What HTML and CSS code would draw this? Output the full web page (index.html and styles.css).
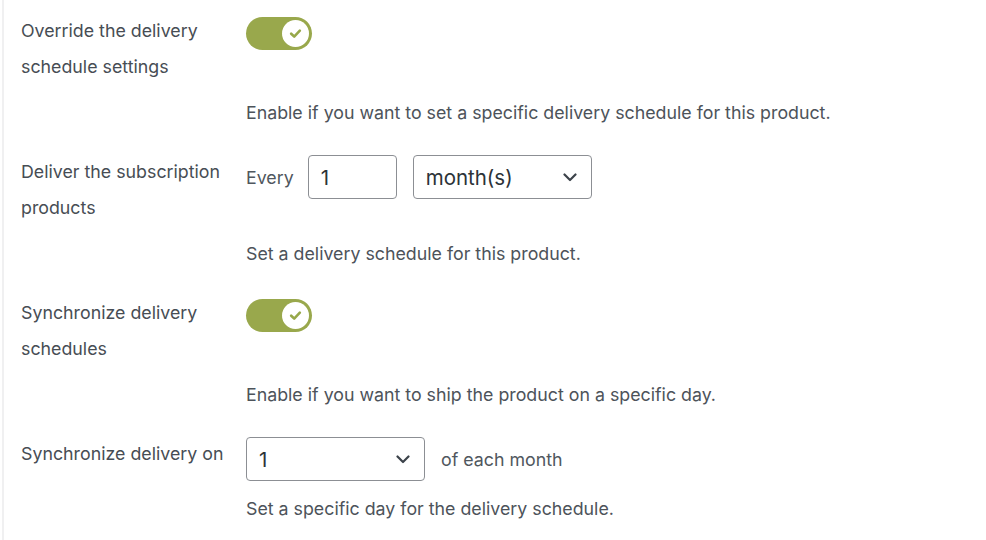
FILE: index.html
```html
<!DOCTYPE html>
<html>
<head>
<meta charset="utf-8">
<link rel="stylesheet" href="styles.css">
</head>
<body>
<div class="panel">
  <div class="field">
    <div class="label">Override the delivery<br>schedule settings</div>
    <div class="control toggle-cell">
      <span class="toggle"><span class="knob"><svg width="13" height="11" viewBox="0 0 12 10"><path d="M2 5.2 L4.8 7.8 L10 2.4" fill="none" stroke="#97a84a" stroke-width="2.4" stroke-linecap="round" stroke-linejoin="round"/></svg></span></span>
    </div>
    <div class="desc">Enable if you want to set a specific delivery schedule for this product.</div>
  </div>

  <div class="field">
    <div class="label">Deliver the subscription<br>products</div>
    <div class="control inline">
      <span class="text">Every</span>
      <span class="input num">1</span>
      <span class="input select wide">month(s)<svg class="chev" width="14" height="9" viewBox="0 0 14 9"><path d="M1.5 1.5 L7 7 L12.5 1.5" fill="none" stroke="#3c434a" stroke-width="2.2" stroke-linecap="round" stroke-linejoin="round"/></svg></span>
    </div>
    <div class="desc">Set a delivery schedule for this product.</div>
  </div>

  <div class="field">
    <div class="label">Synchronize delivery<br>schedules</div>
    <div class="control toggle-cell">
      <span class="toggle"><span class="knob"><svg width="13" height="11" viewBox="0 0 12 10"><path d="M2 5.2 L4.8 7.8 L10 2.4" fill="none" stroke="#97a84a" stroke-width="2.4" stroke-linecap="round" stroke-linejoin="round"/></svg></span></span>
    </div>
    <div class="desc">Enable if you want to ship the product on a specific day.</div>
  </div>

  <div class="field">
    <div class="label">Synchronize delivery on</div>
    <div class="control inline">
      <span class="input select wide">1<svg class="chev" width="14" height="9" viewBox="0 0 14 9"><path d="M1.5 1.5 L7 7 L12.5 1.5" fill="none" stroke="#3c434a" stroke-width="2.2" stroke-linecap="round" stroke-linejoin="round"/></svg></span>
      <span class="text after">of each month</span>
    </div>
    <div class="desc">Set a specific day for the delivery schedule.</div>
  </div>
</div>
</body>
</html>
```
FILE: styles.css
```css
html, body {
  margin: 0;
  padding: 0;
  background: #ffffff;
}
body {
  font-family: Inter, "Noto Sans", "Liberation Sans", sans-serif;
  font-size: 17.8px;
  color: #50575e;
}
.panel {
  margin-left: 2px;
  border-left: 2px solid #f0f0f1;
  min-height: 540px;
  padding-top: 13px;
  box-sizing: border-box;
}
.field {
  display: grid;
  grid-template-columns: 242px auto;
  margin-bottom: 29px;
}
.label {
  grid-column: 1;
  grid-row: 1;
  padding-left: 17px;
  line-height: 36px;
  color: #474d54;
}
.control {
  grid-column: 2;
  grid-row: 1;
}
.desc {
  grid-column: 2;
  grid-row: 2;
  margin-top: 16px;
  line-height: 24px;
  color: #4d535a;
}
.toggle-cell {
  padding-top: 4px;
}
.toggle {
  display: flex;
  align-items: center;
  justify-content: flex-end;
  width: 66px;
  height: 33px;
  border-radius: 17px;
  background: #99a84c;
  box-sizing: border-box;
  padding-right: 3px;
}
.knob {
  display: flex;
  align-items: center;
  justify-content: center;
  width: 27px;
  height: 27px;
  border-radius: 50%;
  background: #ffffff;
}
.inline {
  display: flex;
  align-items: center;
  padding-top: 1px;
  align-self: start;
}
.text {
  color: #50575e;
}
.input {
  display: flex;
  align-items: center;
  height: 44px;
  box-sizing: border-box;
  border: 1px solid #8c8f94;
  border-radius: 4px;
  padding: 0 12px;
  color: #2c3338;
  background: #fff;
  font-size: 20.5px;
}
.num {
  width: 89px;
  margin-left: 14px;
}
.select {
  justify-content: space-between;
  padding-right: 14px;
}
.num + .select {
  margin-left: 16px;
}
.wide {
  width: 179px;
}
.after {
  margin-left: 16px;
}
```
